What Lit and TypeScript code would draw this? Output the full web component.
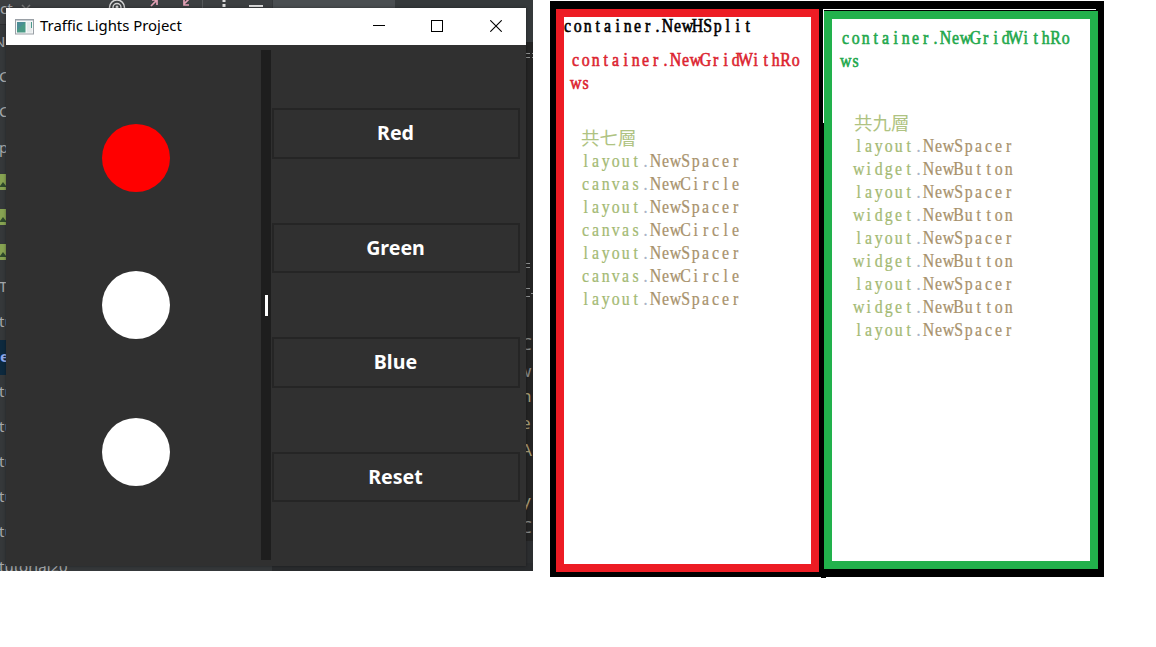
import { LitElement, html, css, svg } from "lit";
import { customElement, property } from "lit/decorators.js";

type Part = [text: string, cls: string];

const SPACER: [string, string] = ["layout", "NewSpacer"];
const CIRCLE: [string, string] = ["canvas", "NewCircle"];
const BUTTON: [string, string] = ["widget", "NewButton"];

const CELL = 10;
const SQUEEZE = 0.88;

/** One line of condensed serif text set on a fixed 10px character grid. */
function gridLine(parts: Part[], cls = "") {
  let col = 0;
  const spans = parts.map(([text, c]) => {
    const xs = [...text].map(() => ((col++ + 0.46) * CELL / SQUEEZE).toFixed(2)).join(" ");
    return svg`<tspan class=${c} x=${xs}>${text}</tspan>`;
  });
  return html`<svg class="line ${cls}" width=${col * CELL + 2} height="23"><text y="17" text-anchor="middle" transform="scale(${SQUEEZE} 1)">${spans}</text></svg>`;
}

const lineStyles = css`
  .line { display: block; overflow: visible; font: 18px "Liberation Serif", serif; fill: currentColor; stroke: currentColor; stroke-width: .25px; }
`;

/** Editor that shows around the edges of the app window. */
@customElement("editor-backdrop")
class EditorBackdrop extends LitElement {
  static styles = css`
    :host { display: block; }
    svg { display: block; }
    .tree { font: 15px "Noto Sans", sans-serif; fill: #a6a8aa; }
    .code { font: 17px "Noto Sans", sans-serif; fill: #858787; }
    .gold { fill: #a39a76; }
    .sel { fill: #8fa8e8; font-weight: 700; }
  `;
  render() {
    return html`<svg width="533" height="571" viewBox="0 0 533 571">
      <rect width="533" height="571" fill="#35383a" />
      <rect width="272" height="24" fill="#3c3f41" />
      <rect x="273" width="122" height="9" fill="#4a4e51" />
      <rect x="395" width="138" height="42" fill="#35393b" />
      <rect x="526" y="42" width="7" height="499" fill="#242424" />
      <rect x="526" y="541" width="7" height="30" fill="#2c2e30" />
      <rect x="272" y="563" width="261" height="8" fill="#292b2d" />
      <rect y="24" width="6" height="1" fill="#2c2e30" />
      <rect y="340" width="6" height="35" fill="#0d293e" />
      <g fill="none" stroke="#d5d5d5" stroke-width="1.5">
        <circle cx="117" cy="7.500" r="7.500" /><circle cx="117" cy="7.500" r="4" />
        <path d="M22 5l4 4 4-4" stroke="#777" />
      </g>
      <circle cx="117" cy="7" r="1.500" fill="#d5d5d5" />
      <g fill="none" stroke="#e2a1b5" stroke-width="1.700">
        <path d="M151 6l6-6M152 0h5v5M190-2l-6 6M184 0v5h5" />
      </g>
      <path d="M202.500 0v8" stroke="#55585a" />
      <path d="M224 0v2M224 4v3" stroke="#ddd" stroke-width="3" />
      <path d="M249 6h14" stroke="#ddd" stroke-width="2" />
      ${[174, 209, 244].map((y) => svg`<rect y=${y} width="6" height="16" fill="#87a352" />
        <path d=${`M0 ${y + 12}l3-4 3 4v1h-6z`} fill="#2f4a2c" />`)}
      <text class="tree" x="0" y="14">ct</text>
      <text class="tree" x="-6" y="47">N</text>
      <text class="tree" x="-1" y="82">C</text>
      <text class="tree" x="-1" y="117">C</text>
      <text class="tree" x="-1" y="153">p</text>
      <text class="tree" x="-1" y="292">T</text>
      <text class="tree sel" x="0" y="362">e</text>
      ${[327, 397, 432, 467, 502, 537].map((y) => svg`<text class="tree" x="-1" y=${y}>tu</text>`)}
      <text class="tree" x="-1" y="572">tutorial20</text>
      <g stroke="#8d8f8f">
        ${[53, 263].map((y) => svg`<path d=${`M526 ${y}.5h4M526 ${y + 4}.5h4`} />`)}
        <path d="M526 288.500h4M526 296.500h4M531 293.500h2M532 53.500h1M532 57.500h1" />
      </g>
      <text class="code" x="521" y="350">C</text>
      <text class="code" x="518" y="377" font-style="italic">w</text>
      <text class="code gold" x="521" y="402">n</text>
      <text class="code gold" x="521" y="429">e</text>
      <text class="code gold" x="521" y="456">A</text>
      <text class="code gold" x="522" y="507">y</text>
      <text class="code" x="521" y="533">C</text>
    </svg>`;
  }
}

@customElement("traffic-window")
class TrafficWindow extends LitElement {
  static styles = css`
    :host { display: flex; flex-direction: column; background: #303030; box-shadow: 0 0 3px #0006; }
    .bar { height: 37px; flex: none; background: #fff; display: flex; align-items: center; padding: 0 24px 0 9px; box-sizing: border-box; }
    .title { font: 14.900px/20px "Noto Sans", sans-serif; color: #000; margin-left: 6px; padding-bottom: 3px; flex: 1; white-space: nowrap; }
    .controls { display: flex; gap: 46px; padding-bottom: 1px; }
    .controls svg:last-child { margin-left: 1px; }
    svg { display: block; }
    .split { flex: 1; display: grid; grid-template-columns: 255px 10px 1fr; padding: 5px 0 6px; min-height: 0; }
    .lights { display: flex; flex-direction: column; align-items: center; gap: 79px; padding: 74px 0 0 5px; }
    .light { width: 68px; height: 68px; border-radius: 50%; background: #fff; flex: none; }
    .red { background: #f00; }
    .divider { background: #1e1e1e; display: flex; align-items: center; justify-content: center; }
    .grip { width: 3px; height: 21px; background: #fff; }
    .buttons { display: flex; flex-direction: column; gap: 64.100px; padding: 58px 6px 0 1px; }
    .button { height: 50.500px; flex: none; box-sizing: border-box; border: 2px solid #252525; background: #303030; color: #fff; font: 700 19.600px/46px "Noto Sans", sans-serif; padding: 0 1px 0 0; text-align: center; }
  `;
  render() {
    return html`
      <div class="bar">
        <svg width="19" height="16" viewBox="0 0 19 16">
          <rect x=".5" y=".5" width="18" height="14.500" fill="#f5f7f7" stroke="#9aa0a6" />
          <path d="M1 1.500h17" stroke="#c5cbd2" />
          <rect x="2" y="3" width="8.500" height="10.500" fill="#4b9a86" />
          <path d="M2 3h8.500l-8.500 8z" fill="#4b86a0" opacity=".6" />
          <rect x="12" y="3" width="5" height="10.500" fill="#e6eaeb" />
          <path d="M16.500 3v6" stroke="#4a9a8c" />
        </svg>
        <span class="title">Traffic Lights Project</span>
        <div class="controls">
          <svg width="12" height="12"><path d="M0 5.500h12" stroke="#000" /></svg>
          <svg width="12" height="12"><rect x=".5" y=".5" width="11" height="11" fill="none" stroke="#000" /></svg>
          <svg width="12" height="12"><path d="M.3.3l11.400 11.400M11.700.3L.3 11.700" stroke="#000" stroke-width="1.100" /></svg>
        </div>
      </div>
      <div class="split">
        <div class="lights">
          <div class="light red"></div><div class="light"></div><div class="light"></div>
        </div>
        <div class="divider"><div class="grip"></div></div>
        <div class="buttons">
          ${["Red", "Green", "Blue", "Reset"].map((t) => html`<button class="button">${t}</button>`)}
        </div>
      </div>`;
  }
}

@customElement("layer-list")
class LayerList extends LitElement {
  @property() heading = "";
  @property({ attribute: false }) rows: [string, string][] = [];
  static styles = [lineStyles, css`
    :host { display: block; color: #a9bd7b; }
    .heading { font: 400 18.500px/21px "Noto Sans CJK TC", sans-serif; height: 23px; color: #afc382; }
    .pkg { fill: #a4ba74; stroke: #a4ba74; }
    .dot { fill: #a9b4c8; stroke: #a9b4c8; }
    .fn { fill: #a8926c; stroke: #a8926c; }
  `];
  render() {
    return html`<div class="heading">${this.heading}</div>
      ${this.rows.map(([pkg, fn]) => gridLine([[pkg, "pkg"], [".", "dot"], [fn, "fn"]]))}`;
  }
}

@customElement("app-root")
class AppRoot extends LitElement {
  static styles = [lineStyles, css`
    :host { display: flex; align-items: flex-start; gap: 17px; width: 1156px; height: 647px; background: #fff; overflow: hidden; }
    .shot { display: grid; width: 533px; height: 571px; flex: none; overflow: hidden; }
    .shot > * { grid-area: 1 / 1; }
    traffic-window { margin: 8px 7px 5px 6px; }
    .figure { flex: none; margin-top: 1px; }
    .diagram { display: flex; align-items: flex-start; box-sizing: border-box; width: 554px; height: 576px; padding: 8px 6px 0; background: #000; }
    .notch { width: 5px; height: 1px; margin-left: 271px; background: #000; }
    .pane { box-sizing: border-box; background: #fff; flex: none; }
    .left { width: 263px; height: 563px; border: 8px solid #ed1c24; }
    .gutter { width: 3px; flex: none; }
    .edge { flex: none; width: 276px; box-sizing: border-box; background: linear-gradient(#fff, #fff) 1px 0 / 273px 1px no-repeat, linear-gradient(#fff, #fff) 1px 0 / 1px 114px no-repeat; padding: 2px 0 0 2px; }
    .right { width: 274px; height: 558px; border: 8px solid #22b14c; padding: 8px 0 0 9px; }
    .name .line { stroke-width: .6px; }
    .black { color: #000; margin-top: -2px; margin-left: -1px; }
    .crimson { color: #dc2430; margin: 11px 0 0 7px; }
    .green { color: #22a84c; }
    .seven { margin: 32px 0 0 17px; }
    .nine { margin: 39px 0 0 13px; }
  `];
  render() {
    return html`
      <div class="shot">
        <editor-backdrop></editor-backdrop>
        <traffic-window></traffic-window>
      </div>
      <div class="figure">
        <div class="diagram">
          <div class="pane left">
            <div class="name black">${gridLine([["container.NewHSplit", ""]])}</div>
            <div class="name crimson">${gridLine([["container.NewGridWithRo", ""]])}${gridLine([["ws", ""]])}</div>
            <layer-list class="seven" heading="共七層" .rows=${[SPACER, CIRCLE, SPACER, CIRCLE, SPACER, CIRCLE, SPACER]}></layer-list>
          </div>
          <div class="gutter"></div>
          <div class="edge">
            <div class="pane right">
              <div class="name green">${gridLine([["container.NewGridWithRo", ""]])}${gridLine([["ws", ""]])}</div>
              <layer-list class="nine" heading="共九層" .rows=${[SPACER, BUTTON, SPACER, BUTTON, SPACER, BUTTON, SPACER, BUTTON, SPACER]}></layer-list>
            </div>
          </div>
        </div>
        <div class="notch"></div>
      </div>`;
  }
}
